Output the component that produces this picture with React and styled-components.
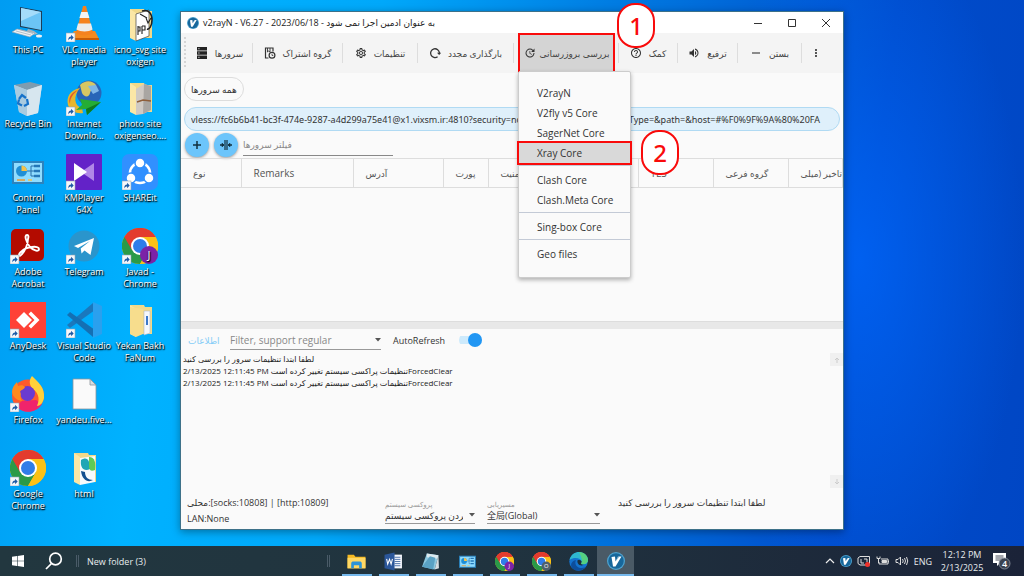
import React, { useState } from 'react';
import styled, { createGlobalStyle } from 'styled-components'
import { MdVolumeUp, MdHelpOutline, MdUpdate, MdOutlineSettings, MdMoreVert } from 'react-icons/md'

const SHARE_LINK = 'vless://fc6b6b41-bc3f-474e-9287-a4d299a75e41@x1.vixsm.ir:4810?security=none&flow=&type=&headerType=&path=&host=#%F0%9F%9A%80%20FA'

const Shortcut = () => (
    <g>
        <rect x="0" y="27" width="9" height="9" fill="#f4f7fa" stroke="#8fa3b5" strokeWidth=".6" />
        <path d="M2.2 34.4c0-2.6 1-3.7 2.9-3.9v-1.7l2.6 2.8-2.6 2.6v-1.6c-1.3 0-2.1.5-2.9 1.8z" fill="#1d5aa5" />
    </g>
)

const Folder = ({ children }) => (
    <g>
        <path d="M8 3h14l1 2h7v27H14z" fill="#f1d98a" />
        <path d="M8 3l6 4v28l-6-3z" fill="#fbe7a6" />
        {children}
    </g>
)

const ChromeShape = () => (
    <g>
        <circle cx="18" cy="18" r="18" fill="#fbc116" />
        <path d="M18 18L2.4 9A18 18 0 0 1 33.6 9z" fill="#e33b2e" />
        <path d="M2.4 9A18 18 0 0 0 18 36l7.8-13.5L18 18z" fill="#2a9a48" />
        <path d="M18 9h15.6A18 18 0 0 1 18 36l7.8-13.5z" fill="#fbc116" />
        <path d="M2.4 9l7.8 13.5L18 9h15.6A18 18 0 0 0 2.4 9z" fill="#e33b2e" />
        <circle cx="18" cy="18" r="9" fill="#fff" />
        <circle cx="18" cy="18" r="7" fill="#2f7de9" />
    </g>
)

const V2Logo = ({ size }) => (
    <svg width={size} height={size} viewBox="0 0 36 36">
        <circle cx="18" cy="18" r="18" fill="#4fa3cf" />
        <circle cx="18" cy="18" r="15.5" fill="#17679b" />
        <path d="M9 10l7-1 1 10 5-10h7L17 29h-5z" fill="#fff" />
        <path d="M17 19l5-10h3z" fill="#17679b" opacity=".5" />
    </svg>
)

const PanelShape = () => (
    <g>
        <rect x="2" y="7" width="32" height="23" fill="#2c83bd" />
        <rect x="4" y="9" width="28" height="19" fill="#8fdcff" />
        <circle cx="11.500" cy="17" r="5.500" fill="#1f8fd6" />
        <path d="M11.500 17v-5.500a5.500 5.500 0 0 1 5.500 5.500z" fill="#f5c24b" />
        <path d="M17 17h4v-5h3M21 17v5h3M21 17h3" stroke="#276fa8" fill="none" />
        <path d="M24 12h6M24 17h6M24 22h6" stroke="#2477b8" strokeWidth="2.500" />
        <path d="M7 26h8" stroke="#f19b2c" strokeWidth="1.500" />
        <path d="M18 26h4" stroke="#f5c24b" strokeWidth="1.500" />
    </g>
)

const Badge = ({ letter, color }) => (
    <g>
        <circle cx="27" cy="27" r="9" fill={color} />
        <text x="27" y="31" fontSize="11" textAnchor="middle" fill="#fff">{letter}</text>
    </g>
)

const art = {
    pc: (
        <g>
            <path d="M10 1l22 4v20l-22-4z" fill="#1e3c55" />
            <path d="M11 2l20 4v18l-20-4z" fill="#6cc4f5" />
            <path d="M11 2l20 4-20 9z" fill="#a5dcfa" />
            <path d="M18 23l6 2 4 3-6 1-6-2z" fill="#a9b6c0" />
            <path d="M7 23l18 4-5 4-18-5z" fill="#eef2f5" stroke="#8fa0ad" strokeWidth=".6" />
            <path d="M6 25l15 4M9 23.500l14 4" stroke="#9aa9b5" strokeWidth=".7" />
            <ellipse cx="29" cy="30" rx="3" ry="1.500" fill="#eef2f5" />
        </g>
    ),
    vlc: (
        <g>
            <path d="M8 25h21l4 8H3z" fill="#f58a1f" />
            <path d="M3 32h30v2H3z" fill="#c75b06" />
            <path d="M17 0h3l7 27c-4 3-13 3-17 0z" fill="#f5821f" />
            <path d="M15.200 6h6.400l1.800 6h-10z" fill="#f4f4f4" />
            <path d="M12 17.500h13l1.600 6c-4 2.500-12 2.500-16.200 0z" fill="#ececec" />
        </g>
    ),
    iconsFolder: (
        <Folder>
            <path d="M14 8l13-4v26l-13 5z" fill="#fff" stroke="#444" strokeWidth=".7" />
            <path d="M20 5c7-2 10 3 10 9s-3 10-5 9" fill="none" stroke="#222" strokeWidth="1.600" />
            <path d="M16 20v9m0-8h2v4h-2M20 20v8m0-8h3v4h-3M24 12l2 5 3-5M18 8l7 4" fill="none" stroke="#222" strokeWidth="1.100" />
        </Folder>
    ),
    bin: (
        <g>
            <path d="M4 5l28 0-4 28-11 3-8-4z" fill="#bcd8e8" />
            <path d="M4 5l13 5 15-5-12-3z" fill="#7f9caf" />
            <path d="M4 5l13 5v26l-8-4z" fill="#a9cbe0" />
            <path d="M17 10l15-5-4 28-11 3z" fill="#d7e6ef" />
            <path d="M9 19l3-4 4 3M17 19l1 5-4 2M12 25.500l-4-2 1-4" stroke="#1672c9" strokeWidth="2.200" fill="none" />
        </g>
    ),
    idm: (
        <g>
            <circle cx="23" cy="13" r="12.500" fill="#2865b8" />
            <path d="M14 5c5-5 12-5 16 0-1 5-5 3-6 8s-6 4-8 0z" fill="#d8c763" />
            <path d="M22 6l8-1 3 6-6 3z" fill="#7fb6e8" />
            <path d="M14 8C4 10 0 17 2 25c2 6 9 9 15 8l-1-5C8 26 7 16 14 8z" fill="#e9b62b" />
            <path d="M12 10C4 13 2 19 4 24c0-6 3-10 8-14z" fill="#e4572d" />
            <path d="M14 19l21 3-14 13-1-6-10 1 6-5z" fill="#25ad35" />
            <path d="M35 22L21 35l-1-6z" fill="#0d7a22" />
        </g>
    ),
    photoFolder: (
        <Folder>
            <path d="M14 9l8-5 7 2v24l-8 4-7 1z" fill="#cfcac4" />
            <path d="M22 4l7 2v24l-8 4z" fill="#a9a6a2" />
            <path d="M15 22l6-2 8 1" stroke="#8e5e3a" strokeWidth="1.500" fill="none" />
        </Folder>
    ),
    panel: <PanelShape />,
    km: (
        <g>
            <rect width="36" height="36" rx="1" fill="#6322c8" />
            <path d="M28 9v18l-13-9z" fill="#c9a9f2" opacity=".75" />
            <path d="M8 9v18l13-9z" fill="#fff" />
        </g>
    ),
    shareit: (
        <g>
            <rect width="36" height="36" rx="7" fill="#3190ff" />
            <circle cx="18" cy="19" r="10" fill="none" stroke="#fff" strokeWidth="2.500" />
            <g fill="#fff" stroke="#3190ff" strokeWidth="1.500">
                <circle cx="18" cy="9" r="5" />
                <circle cx="9" cy="24" r="5" />
                <circle cx="27" cy="24" r="5" />
            </g>
        </g>
    ),
    acrobat: (
        <g>
            <rect x="1" y="1" width="33" height="32" rx="5" fill="#b30b00" />
            <path d="M17 7c-3 0-1 7 3 12 4 4 9 5 9 2 0-4-13-2-17 2-5 4-3 7 0 3 3-3 6-10 6-15 1-3 0-4-1-4z" fill="none" stroke="#fff" strokeWidth="1.900" />
        </g>
    ),
    telegram: (
        <g>
            <circle cx="18" cy="18" r="15.500" fill="#2a95cc" />
            <path d="M8 18l20-8-3.500 17-6-4.500-3 3-.8-5L24 13l-12 7z" fill="#fff" />
        </g>
    ),
    chromeJ: <g><ChromeShape /><Badge letter="J" color="#7b23a7" /></g>,
    chromeO: <g><ChromeShape /><Badge letter="O" color="#4f5f6b" /></g>,
    anydesk: (
        <g>
            <rect width="36" height="36" fill="#ff4136" />
            <path d="M14 10l8 8-8 8-8-8z" fill="#fff" />
            <path d="M18.500 12l2.500-2.500 8.500 8.500-8.500 8.500-2.500-2.500 6-6z" fill="#fff" />
        </g>
    ),
    vscode: (
        <g>
            <path d="M27 1L1 23l3 3L29 8z" fill="#1a78bd" />
            <path d="M27 35L1 13l3-3 25 18z" fill="#1470b4" />
            <path d="M27 0l9 4v28l-9 4z" fill="#2aa0ee" />
        </g>
    ),
    fontFolder: (
        <Folder>
            <path d="M8 5l13 2v25l-7 3-6-3z" fill="#f7dd8d" />
            <path d="M22 9h6v22l-6 2z" fill="#f5f7fb" stroke="#aeb9c9" strokeWidth=".6" />
            <path d="M25 14v9" stroke="#3d78c9" strokeWidth="2" />
        </Folder>
    ),
    firefox: (
        <g>
            <circle cx="18" cy="19.500" r="16" fill="#ff5a2c" />
            <path d="M6 30c6 8 20 8 26-2l-6-4-14 1z" fill="#f0246b" />
            <path d="M22 0c6 6 13 11 12 22-1 5-4 8-7 8 4-9 0-14-5-18-3-4-3-8 0-12z" fill="#ffd13a" />
            <circle cx="17.500" cy="17.500" r="7.500" fill="#6a3bd0" />
            <path d="M2 16c0-4 2-7 5-10l1 4c3-1 5-1 7 1-1 3-5 3-5 5 2 2-1 4 2 9-6-1-9-4-10-9z" fill="#ff8a1f" />
        </g>
    ),
    file: (
        <g>
            <path d="M7 3h17l6 6v24H7z" fill="#fafafa" stroke="#8c959c" strokeWidth=".8" />
            <path d="M24 3v6h6z" fill="#d8dde0" stroke="#8c959c" strokeWidth=".8" />
        </g>
    ),
    chrome: <ChromeShape />,
    htmlFolder: (
        <Folder>
            <path d="M14 8l15-2v26l-15 3z" fill="#f7fafc" />
            <path d="M15 10c6-4 9 0 9 9-6 3-10-1-9-9z" fill="#1fa6b5" />
            <path d="M23 7c6 0 7 6 6 13-4 2-6 0-6-4z" fill="#5ecb55" />
            <path d="M15 21c1 9 7 12 12 9-5 0-8-3-8-8z" fill="#124f8f" />
        </Folder>
    ),
    explorer: (
        <g>
            <path d="M1 5h12l3 4h19v22H1z" fill="#f5b921" />
            <path d="M1 11h34v20H1z" fill="#ffd864" />
            <path d="M8 31v-9c0-3 2-4 4-4h12c2 0 4 1 4 4v9h-5v-6H13v6z" fill="#2c93d8" />
        </g>
    ),
    word: (
        <g>
            <rect x="16" y="5" width="18" height="26" fill="#f4f7fc" />
            <path d="M20 10h11M20 14h11M20 18h11M20 22h11M20 26h11" stroke="#2b579a" strokeWidth="1.500" />
            <path d="M1 5l19-4v34L1 31z" fill="#2b579a" />
            <path d="M5 13l2 10 3.500-9 3 9 2.500-10" stroke="#fff" strokeWidth="2" fill="none" />
        </g>
    ),
    notepad: (
        <g>
            <path d="M11 3l22 3-7 27-24-5z" fill="#8cc7df" />
            <path d="M11 3l22 3-2 7-20-3z" fill="#dbe9ef" />
            <path d="M2 28L17 8l10 3-4 22z" fill="#5aa2c4" />
            <path d="M26 33l7-27 1 25z" fill="#d5dde1" />
        </g>
    ),
    edge: (
        <g>
            <circle cx="18" cy="18" r="17.500" fill="#1373cf" />
            <path d="M1 15C4 4 12 0 19 0c10 0 17 8 17 15 0 6-5 9-12 8-2-1-2-2 0-4-1-8-14-10-23-4z" fill="#2fb8d0" />
            <path d="M19 0c10 0 17 8 17 15 0 6-5 9-12 8-2-1-2-2 0-4 2-6-3-14-5-19z" fill="#55d080" />
            <path d="M12 20c0 9 10 13 19 9-7 9-20 9-26 0-3-5 1-13 8-14z" fill="#0d4e9c" />
            <path d="M16 16c4-2 8 0 8 3-3 3 0 6 4 5-6 4-13-1-12-8z" fill="#1d303b" />
        </g>
    ),
}

const desktopItems = [
    { label: 'This PC', icon: 'pc' },
    { label: 'VLC media player', icon: 'vlc', link: true },
    { label: 'icno_svg site oxigen', icon: 'iconsFolder' },
    { label: 'Recycle Bin', icon: 'bin' },
    { label: 'Internet Downlo...', icon: 'idm', link: true },
    { label: 'photo site oxigenseo....', icon: 'photoFolder' },
    { label: 'Control Panel', icon: 'panel' },
    { label: 'KMPlayer 64X', icon: 'km', link: true },
    { label: 'SHAREit', icon: 'shareit', link: true },
    { label: 'Adobe Acrobat', icon: 'acrobat', link: true },
    { label: 'Telegram', icon: 'telegram', link: true },
    { label: 'Javad - Chrome', icon: 'chromeJ', link: true },
    { label: 'AnyDesk', icon: 'anydesk', link: true },
    { label: 'Visual Studio Code', icon: 'vscode', link: true },
    { label: 'Yekan Bakh FaNum', icon: 'fontFolder' },
    { label: 'Firefox', icon: 'firefox', link: true },
    { label: 'yandeu.five...', icon: 'file' },
    null,
    { label: 'Google Chrome', icon: 'chrome', link: true },
    { label: 'html', icon: 'htmlFolder' },
]

const ServersIcon = () => (
    <svg width="12" height="12" viewBox="0 0 12 12">
        <path d="M1 0h10v3.400H1zM1 4.300h10v3.400H1zM1 8.600h10V12H1z" fill="#222" />
        <path d="M2.300 1.700h1.200M2.300 6h1.200M2.300 10.300h1.200" stroke="#ddd" />
    </svg>
)

const GroupIcon = () => (
    <svg width="12" height="12" viewBox="0 0 12 12" fill="none" stroke="#333">
        <path d="M4.500 11H1.500V1H9v3.500" strokeWidth="1.200" />
        <path d="M3.500 1v4l1.200-1L6 5V1" strokeWidth=".9" />
        <circle cx="8" cy="8.300" r="2.900" strokeWidth="1.200" />
        <path d="M8 6.800v1.700h1.300" strokeWidth=".8" />
    </svg>
)

const ReloadIcon = () => (
    <svg width="12" height="12" viewBox="0 0 12 12">
        <path d="M8.600 9.700A4.400 4.400 0 1 1 10.400 6" fill="none" stroke="#333" strokeWidth="1.300" />
        <path d="M8 5.700h4.200L10.100 8z" fill="#333" />
    </svg>
)

const MinusIcon = () => (
    <svg width="12" height="12" viewBox="0 0 12 12">
        <path d="M2 6h8" stroke="#444" strokeWidth="1.200" />
    </svg>
)

const toolbarLeft = [
    { text: 'سرورها', icon: <ServersIcon />, width: 66 },
    { text: 'گروه اشتراک', icon: <GroupIcon />, width: 90 },
    { text: 'تنظیمات', icon: <MdOutlineSettings />, width: 75 },
    { text: 'بارگذاری مجدد', icon: <ReloadIcon />, width: 96 },
]

const toolbarRight = [
    { text: 'کمک', icon: <MdHelpOutline />, width: 59 },
    { text: 'ترفیع', icon: <MdVolumeUp />, width: 60 },
    { text: 'بستن', icon: <MinusIcon />, width: 64 },
]

const menuGroups = [
    ['V2rayN', 'V2fly v5 Core', 'SagerNet Core', 'Xray Core'],
    ['Clash Core', 'Clash.Meta Core'],
    ['Sing-box Core'],
    ['Geo files'],
]

const columns = [
    { title: 'نوع', width: 60 },
    { title: 'Remarks', width: 112, latin: true },
    { title: 'آدرس', width: 90 },
    { title: 'پورت', width: 45 },
    { title: 'امنیت', width: 75 },
    { title: '', width: 75 },
    { title: 'TLS', width: 75, latin: true },
    { title: 'گروه فرعی', width: 75 },
    { title: 'تاخیر (میلی' },
]

const logLines = [
    'لطفا ابتدا تنظیمات سرور را بررسی کنید',
    '2/13/2025 12:11:45 PM تنظیمات پراکسی سیستم تغییر کرده استForcedClear',
    '2/13/2025 12:11:45 PM تنظیمات پراکسی سیستم تغییر کرده استForcedClear',
]

const taskItems = ['explorer', 'word', 'notepad', 'panel', 'chromeJ', 'chromeO', 'edge']

const Caret = () => (
    <CaretSvg width="6" height="4" viewBox="0 0 6 4"><path d="M0 0h6L3 3.500z" fill="#555" /></CaretSvg>
)

const DesktopIcons = () => (
    <IconGrid>
        {desktopItems.map((item, i) => item ? (
            <DesktopIcon key={item.label}>
                <svg width="36" height="36" viewBox="0 0 36 36">
                    {art[item.icon]}
                    {item.link && <Shortcut />}
                </svg>
                <span>{item.label}</span>
            </DesktopIcon>
        ) : <span key={i} />)}
    </IconGrid>
)

const UpdateMenu = () => (
    <Menu>
        {menuGroups.map((group) => (
            <MenuGroup key={group[0]}>
                {group.map((name) => (
                    <MenuItem key={name} $active={name === 'Xray Core'}>
                        {name}
                        {name === 'Xray Core' && <StepTwo>2</StepTwo>}
                    </MenuItem>
                ))}
            </MenuGroup>
        ))}
    </Menu>
)

const Toolbar = () => (
    <ToolbarRow>
        <ToolGrip />
        {toolbarLeft.map((tool) => (
            <ToolCell key={tool.text} $width={tool.width}>
                <ToolButton>{tool.icon}<span>{tool.text}</span></ToolButton>
            </ToolCell>
        ))}
        <ToolCell $width={105}>
            <UpdateButton><MdUpdate /><span>بررسی بروزرسانی</span></UpdateButton>
            <StepOne>1</StepOne>
            <UpdateMenu />
        </ToolCell>
        {toolbarRight.map((tool) => (
            <ToolCell key={tool.text} $width={tool.width}>
                <ToolButton>{tool.icon}<span>{tool.text}</span></ToolButton>
            </ToolCell>
        ))}
        <MoreButton aria-label="More"><MdMoreVert /></MoreButton>
    </ToolbarRow>
)

const Taskbar = () => (
    <Bar>
        <TaskButton aria-label="Start">
            <svg width="12" height="12" viewBox="0 0 12 12" fill="#fff">
                <path d="M0 1.700l5-.7v4.700H0zM5.600.9L12 0v5.700H5.600zM0 6.300h5V11l-5-.7zM5.600 6.300H12V12l-6.400-.9z" />
            </svg>
        </TaskButton>
        <TaskButton aria-label="Search">
            <svg width="18" height="18" viewBox="0 0 18 18" fill="none" stroke="#fff" strokeWidth="1.700">
                <circle cx="10.500" cy="7" r="5.800" />
                <path d="M6.500 11.500L1 17" />
            </svg>
        </TaskButton>
        <BarGrip />
        <FolderLabel>New folder (3)</FolderLabel>
        <BarGrip />
        <TaskApps>
            {taskItems.map((name) => (
                <TaskApp key={name} aria-label={name}>
                    <svg width="19" height="19" viewBox="0 0 36 36">{art[name]}</svg>
                </TaskApp>
            ))}
            <TaskApp $active aria-label="v2rayN"><V2Logo size={18} /></TaskApp>
        </TaskApps>
        <Tray>
            <svg width="10" height="12" viewBox="0 0 10 12"><path d="M1 8l4-4 4 4" stroke="#eee" strokeWidth="1.200" fill="none" /></svg>
            <V2Logo size={12} />
            <svg width="14" height="14" viewBox="0 0 14 14" fill="none" stroke="#ddd">
                <path d="M1 4l2-1.500h9.500V11H3L1 9.500z" />
                <path d="M4 5v4h3M7 5h3v3" />
                <circle cx="10.500" cy="10.500" r="2.500" fill="#f0322b" stroke="none" />
            </svg>
            <svg width="14" height="12" viewBox="0 0 14 12" fill="none" stroke="#ddd">
                <path d="M5 4h7v5H3V7M12.500 5.500v2" />
                <path d="M1 1.500v2h3v-2M2.500 4v4" />
                <path d="M6 5.500h4.500v2H6z" fill="#ddd" />
            </svg>
            <svg width="14" height="12" viewBox="0 0 14 12" fill="none" stroke="#ddd">
                <path d="M1 4.500h2l2.500-2.500v8L3 7.500H1z" />
                <path d="M7.500 4q1.500 2 0 4M9.500 3q2 3 0 6M11.500 2q2.500 4 0 8" />
            </svg>
            <span>ENG</span>
            <Clock><span>12:12 PM</span><span>2/13/2025</span></Clock>
            <svg width="20" height="18" viewBox="0 0 20 18">
                <path d="M1 1h13v10H8l-3 3v-3H1z" fill="#fff" />
                <path d="M3.500 4h8M3.500 6h8M3.500 8h6" stroke="#1c2536" strokeWidth=".8" />
                <circle cx="12.500" cy="11.500" r="5.500" fill="#3a4250" stroke="#8e96a3" strokeWidth=".8" />
                <text x="12.500" y="15" fontSize="9" fontWeight="600" textAnchor="middle" fill="#fff">4</text>
            </svg>
        </Tray>
    </Bar>
)

const App = () => {
    const [refresh, setRefresh] = useState(true)

    return (
        <Desktop>
            <GlobalStyle />
            <Workspace>
                <DesktopIcons />
                <Window>
                    <TitleBar>
                        <V2Logo size={12} />
                        <Title>v2rayN - V6.27 - 2023/06/18 - به عنوان ادمین اجرا نمی شود</Title>
                        <WindowButton aria-label="Minimize"><svg width="10" height="10"><path d="M1 5.500h8" stroke="#333" /></svg></WindowButton>
                        <WindowButton aria-label="Maximize"><svg width="10" height="10"><path d="M1.500 1.500h7v7h-7z" stroke="#333" fill="none" /></svg></WindowButton>
                        <WindowButton aria-label="Close"><svg width="10" height="10"><path d="M1 1l8 8M9 1L1 9" stroke="#333" /></svg></WindowButton>
                    </TitleBar>
                    <Toolbar />
                    <Chips>
                        <Chip>همه سرورها</Chip>
                    </Chips>
                    <LinkInput aria-label="Share link" readOnly value={SHARE_LINK} />
                    <FilterRow>
                        <RoundButton aria-label="Add server">
                            <svg width="10" height="10"><path d="M1 5h8M5 1v8" stroke="#12303f" strokeWidth="1.500" /></svg>
                        </RoundButton>
                        <RoundButton aria-label="Fit columns">
                            <svg width="12" height="12" viewBox="0 0 12 12" fill="none" stroke="#12303f">
                                <path d="M5 1v10M7 1v10" strokeWidth="1.200" />
                                <path d="M0 6h4M8 6h4" strokeWidth="1.500" />
                                <path d="M2 4l2 2-2 2zM10 4L8 6l2 2z" fill="#12303f" strokeWidth=".5" />
                            </svg>
                        </RoundButton>
                        <ServerFilter aria-label="فیلتر سرورها" placeholder="فیلتر سرورها" />
                    </FilterRow>
                    <ServerArea>
                        <ServerTable>
                            <thead>
                                <tr>
                                    {columns.map((col) => (
                                        <HeadCell key={col.title} $width={col.width} $latin={col.latin}>{col.title}</HeadCell>
                                    ))}
                                </tr>
                            </thead>
                        </ServerTable>
                    </ServerArea>
                    <Splitter />
                    <LogBar>
                        <LogTab href="#log">اطلاعات</LogTab>
                        <LogFilter>
                            <input aria-label="Log filter" placeholder="Filter, support regular" />
                            <Caret />
                        </LogFilter>
                        <label htmlFor="refresh">AutoRefresh</label>
                        <Switch id="refresh" type="checkbox" checked={refresh} onChange={() => setRefresh(!refresh)} />
                    </LogBar>
                    <LogArea>
                        <LogText>
                            {logLines.map((line, i) => <p key={i}>{line}</p>)}
                        </LogText>
                        <ScrollTrack>
                            <ScrollButton aria-label="Scroll up"><svg width="8" height="8"><path d="M4 7V2M2 4l2-2 2 2" stroke="#ccc" fill="none" /></svg></ScrollButton>
                            <ScrollButton aria-label="Scroll down"><svg width="8" height="8"><path d="M4 1v5M2 4l2 2 2-2" stroke="#ccc" fill="none" /></svg></ScrollButton>
                        </ScrollTrack>
                    </LogArea>
                    <StatusBar>
                        <Ports>
                            <span>محلی:[socks:10808] | [http:10809]</span>
                            <span>LAN:None</span>
                        </Ports>
                        <SelectField $width={90}>
                            <label htmlFor="proxy">پروکسی سیستم</label>
                            <select id="proxy"><option>پاک کردن پروکسی سیستم</option></select>
                            <Caret />
                        </SelectField>
                        <SelectField $width={113}>
                            <label htmlFor="routing">مسیریابی</label>
                            <select id="routing"><option>全局(Global)</option></select>
                            <Caret />
                        </SelectField>
                        <StatusText>لطفا ابتدا تنظیمات سرور را بررسی کنید</StatusText>
                    </StatusBar>
                </Window>
            </Workspace>
            <Taskbar />
        </Desktop>
    );
}

export default App;

const GlobalStyle = createGlobalStyle`
    *{
        box-sizing:border-box;
    }
    body{
        margin:0;
        font-family:"Open Sans", "DejaVu Sans", "Noto Sans CJK SC", sans-serif;
        font-size:9px;
        color:#333;
    }
    button, input, select{
        font:inherit;
        color:inherit;
        border:none;
        background:none;
        padding:0;
        margin:0;
        outline:none;
    }
    p{
        margin:0;
    }
`

const Desktop = styled.div`
    min-height:100vh;
    display:flex;
    flex-direction:column;
    background:
        radial-gradient(ellipse 16% 60% at 84% 45%, rgba(0, 104, 255, 0.7), rgba(0, 104, 255, 0)),
        linear-gradient(97deg, #009cf2 0%, #00b2ff 17%, #00a8fa 35%, #0074de 60%, #004ccb 82%, #0046c4 100%);
`

const Workspace = styled.main`
    flex:1;
    display:flex;
    padding:0 180px 0 0;
`

const IconGrid = styled.nav`
    width:168px;
    flex-shrink:0;
    display:grid;
    grid-template-columns:repeat(3, 56px);
    grid-auto-rows:74px;
    align-content:start;
    padding-top:6px;
`

const DesktopIcon = styled.button`
    display:flex;
    flex-direction:column;
    align-items:center;
    color:#fff;
    font-size:9px;
    line-height:12px;
    text-align:center;
    text-shadow:0 1px 2px #000, 1px 1px 1px #000;

    svg{
        flex-shrink:0;
        margin-bottom:2px;
    }
`

const Window = styled.section`
    flex:1;
    min-width:0;
    margin:11px 0 16px 12px;
    display:flex;
    flex-direction:column;
    background:#fafafa;
    border:1px solid #3d7189;
    box-shadow:0 2px 8px rgba(0, 0, 0, 0.35);
`

const TitleBar = styled.header`
    height:21px;
    display:flex;
    align-items:center;
    padding-left:6px;
    background:#fff;
    color:#222;
`

const Title = styled.h1`
    flex:1;
    margin:0 0 0 4px;
    font-size:9px;
    font-weight:400;
`

const WindowButton = styled.button`
    width:34px;
    height:21px;
    display:flex;
    align-items:center;
    justify-content:center;
`

const ToolbarRow = styled.div`
    height:40px;
    flex-shrink:0;
    display:flex;
    align-items:center;
    background:#f4f4f4;
`

const ToolGrip = styled.span`
    width:2px;
    height:32px;
    margin:0 1px 0 3px;
    background:repeating-linear-gradient(#d5d5d5 0 2px, transparent 2px 4px);
`

const ToolCell = styled.div`
    position:relative;
    width:${(props) => props.$width}px;
    height:40px;
    display:flex;
    align-items:center;

    &::after{
        content:"";
        width:1px;
        height:20px;
        background:#ddd;
    }
`

const ToolButton = styled.button`
    flex:1;
    min-width:0;
    height:40px;
    display:flex;
    align-items:center;
    justify-content:center;
    gap:7px;
    color:#444;
    white-space:nowrap;

    svg{
        width:12px;
        height:12px;
        flex-shrink:0;
        color:#333;
    }
`

const UpdateButton = styled(ToolButton)`
    margin:0 3px 0 4px;
    gap:4px;
    background:#d4d4d4;
    border:2px solid #f90b0b;
`

const MoreButton = styled.button`
    margin-left:8px;
    width:12px;
    height:12px;
    font-size:12px;
    line-height:12px;
`

const Step = styled.span`
    position:absolute;
    z-index:3;
    width:38px;
    height:45px;
    display:flex;
    align-items:center;
    justify-content:center;
    background:#fff;
    border:2px solid #f90b0b;
    border-radius:18px;
    color:#f90b0b;
    font-family:"Noto Sans", "Open Sans", sans-serif;
    font-size:24px;
    font-weight:500;
`

const StepOne = styled(Step)`
    top:-30px;
    left:103px;
`

const StepTwo = styled(Step)`
    top:-13px;
    left:122px;
`

const Menu = styled.div`
    position:absolute;
    z-index:2;
    top:38px;
    left:4px;
    width:113px;
    padding:11px 0 13px;
    background:#fafafa;
    border:1px solid #ccc;
    border-radius:2px;
    box-shadow:0 2px 4px rgba(0, 0, 0, 0.3);
`

const MenuGroup = styled.div`
    & + &{
        border-top:1px solid #c3cad6;
        margin-top:2px;
        padding-top:4px;
    }
`

const MenuItem = styled.button`
    position:relative;
    display:block;
    width:100%;
    height:20px;
    padding-left:18px;
    font-size:10px;
    text-align:left;
    background:${(props) => props.$active ? '#d9d9d9' : 'none'};
    outline:${(props) => props.$active ? '2px solid #f90b0b' : 'none'};
`

const Chips = styled.div`
    padding:4px 3px 6px;
`

const Chip = styled.button`
    height:24px;
    padding:0 6px;
    border:1px solid #ddd;
    border-radius:12px;
`

const LinkInput = styled.input`
    height:24px;
    margin:0 3px;
    padding:0 6px;
    font-family:"Noto Sans", sans-serif;
    font-size:9px;
    background:#dff0fb;
    border:1px solid #b0daf3;
    border-radius:12px;
`

const FilterRow = styled.div`
    display:flex;
    align-items:center;
    gap:5px;
    padding:2px 4px 1px;
`

const RoundButton = styled.button`
    width:24px;
    height:24px;
    display:flex;
    align-items:center;
    justify-content:center;
    border-radius:50%;
    background:#6cc5fb;
    box-shadow:0 1px 3px rgba(0, 0, 0, 0.4);
`

const ServerFilter = styled.input`
    width:150px;
    height:22px;
    border-bottom:1px solid #888;

    &::placeholder{
        color:#888;
    }
`

const ServerArea = styled.div`
    flex:1;
    overflow:hidden;
`

const ServerTable = styled.table`
    width:100%;
    table-layout:fixed;
    border-collapse:collapse;
    border-top:1px solid #ddd;
    border-bottom:1px solid #ddd;
`

const HeadCell = styled.th`
    width:${(props) => props.$width ? `${props.$width}px` : 'auto'};
    height:29px;
    padding:0 0 0 12px;
    border-right:1px solid #ddd;
    overflow:hidden;
    white-space:nowrap;
    text-align:left;
    font-size:${(props) => props.$latin ? 10 : 9}px;
    font-weight:400;
    color:#555;
`

const Splitter = styled.div`
    height:8px;
    background:#e8e8e8;
    border-top:1px solid #ddd;
`

const LogBar = styled.div`
    height:22px;
    display:flex;
    align-items:center;
    padding-left:7px;
`

const LogTab = styled.a`
    width:42px;
    color:#86cdf7;
    text-decoration:none;
`

const LogFilter = styled.div`
    width:151px;
    height:20px;
    margin-right:12px;
    display:flex;
    align-items:center;
    border-bottom:1px solid #999;

    input{
        flex:1;
        min-width:0;
        font-size:10px;
    }
    input::placeholder{
        color:#888;
    }
`

const CaretSvg = styled.svg`
    flex-shrink:0;
    justify-self:end;
`

const Switch = styled.input`
    appearance:none;
    width:23px;
    height:14px;
    margin-left:14px;
    display:flex;
    align-items:center;
    justify-content:${(props) => props.checked ? 'flex-end' : 'flex-start'};
    border-radius:7px;
    background:linear-gradient(#cdeafc, #cdeafc) center / 100% 8px no-repeat;

    &::before{
        content:"";
        width:14px;
        height:14px;
        border-radius:50%;
        background:#2196f3;
    }
`

const LogArea = styled.div`
    height:137px;
    padding-top:2px;
    display:flex;
    justify-content:space-between;
`

const LogText = styled.div`
    padding-left:2px;
    font-size:8px;
    line-height:12px;
    color:#222;
`

const ScrollTrack = styled.div`
    display:flex;
    flex-direction:column;
    justify-content:space-between;
`

const ScrollButton = styled.button`
    width:13px;
    height:13px;
    display:flex;
    align-items:center;
    justify-content:center;
    background:#f0f0f0;
`

const StatusBar = styled.footer`
    height:41px;
    display:flex;
    align-items:flex-start;
    padding:7px 0 0 6px;
`

const Ports = styled.div`
    width:198px;
    display:flex;
    flex-direction:column;
    line-height:16px;
`

const SelectField = styled.div`
    width:${(props) => props.$width}px;
    height:29px;
    margin-right:12px;
    display:grid;
    grid-template-columns:minmax(0, 1fr) 12px;
    grid-template-rows:14px 12px;
    align-items:center;
    border-bottom:1px solid #999;

    label{
        grid-column:1 / 3;
        align-self:end;
        font-size:7px;
        line-height:8px;
        color:#999;
    }
    select{
        appearance:none;
        min-width:0;
        width:100%;
        overflow:hidden;
        text-overflow:clip;
    }
`

const StatusText = styled.span`
    margin-left:6px;
    line-height:16px;
`

const Bar = styled.footer`
    height:30px;
    display:flex;
    align-items:center;
    background:linear-gradient(90deg, #22373f, #20333f 50%, #1b2338);
    color:#e8ecee;
    font-size:9px;
`

const TaskButton = styled.button`
    width:36px;
    height:30px;
    display:flex;
    align-items:center;
    justify-content:center;
`

const BarGrip = styled.span`
    width:3px;
    height:12px;
    margin-left:4px;
    border:1px solid #4a5b68;
    border-width:0 1px;
`

const FolderLabel = styled.span`
    width:244px;
    padding-left:8px;
`

const TaskApps = styled.div`
    display:flex;
    margin-left:8px;
`

const TaskApp = styled.button`
    width:37px;
    height:30px;
    padding:0 4px;
    display:flex;
    align-items:center;
    justify-content:center;
    background:
        linear-gradient(#76b9ed, #76b9ed) bottom center / ${(props) => props.$active ? '37px' : '30px'} 2px no-repeat,
        ${(props) => props.$active ? '#4a5a66' : 'transparent'};
`

const Tray = styled.div`
    flex:1;
    display:flex;
    align-items:center;
    justify-content:flex-end;
    gap:5px;
    padding-right:12px;
`

const Clock = styled.div`
    display:flex;
    flex-direction:column;
    align-items:center;
    width:50px;
    line-height:13px;
`
